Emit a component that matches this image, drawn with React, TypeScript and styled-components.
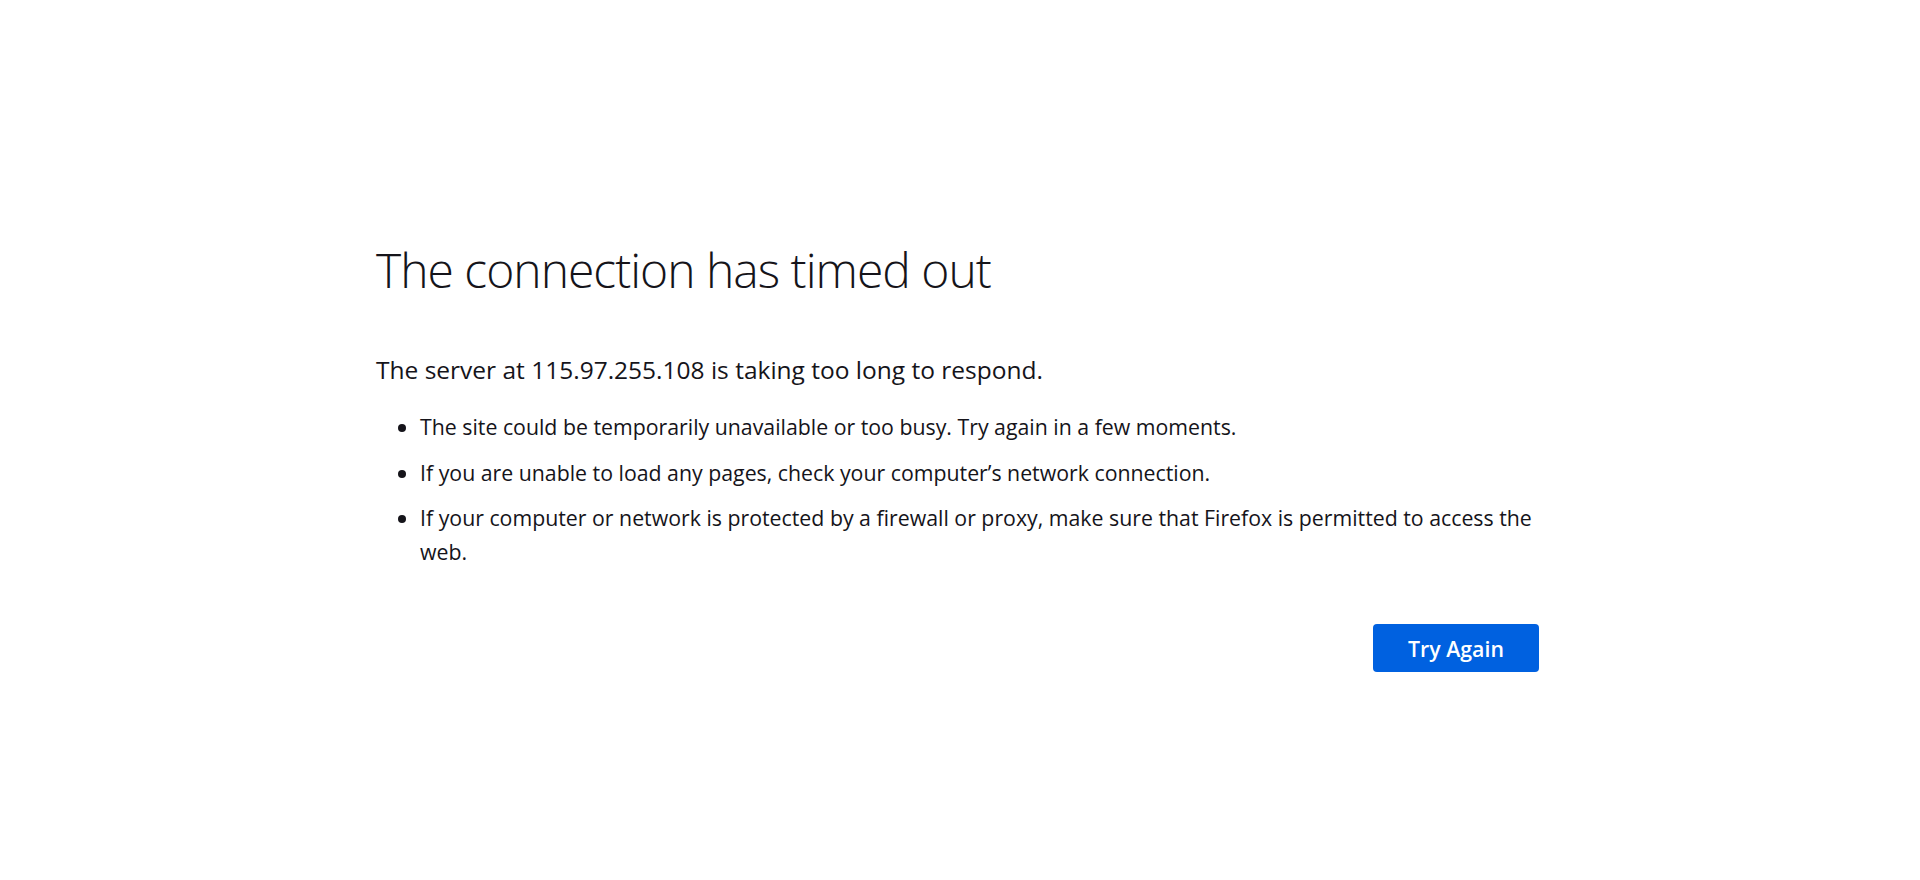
import React from 'react'
import styled, { createGlobalStyle } from 'styled-components'

const GlobalStyle = createGlobalStyle`
  html, body {
    margin: 0;
    padding: 0;
    background: #ffffff;
  }
  body {
    font-family: "Open Sans", "Noto Sans", "Liberation Sans", sans-serif;
    color: #15141a;
  }
`

const Page = styled.main`
  display: flex;
  justify-content: center;
  min-height: 880px;
  box-sizing: border-box;
  padding: 234px 53px 0 48px;
`

const Container = styled.div`
  width: 1163px;
  display: flex;
  flex-direction: column;
`

const Title = styled.h1`
  margin: 0;
  font-size: 48px;
  font-weight: 300;
  line-height: 72px;
  letter-spacing: -1px;
`

const ShortDesc = styled.p`
  margin: 47px 0 0;
  font-size: 24.5px;
  line-height: 34px;
`

const Tips = styled.ul`
  margin: 23px 0 0;
  padding: 0 0 0 44px;
  list-style: disc;
`

const Tip = styled.li`
  font-size: 21.3px;
  line-height: 34px;
  & + & {
    margin-top: 11.5px;
  }
`

const ButtonRow = styled.div`
  display: flex;
  justify-content: flex-end;
  margin-top: 55px;
`

const Button = styled.button`
  width: 166px;
  height: 48px;
  border: none;
  border-radius: 4px;
  background: #0061e0;
  color: #ffffff;
  font-family: inherit;
  font-size: 21.3px;
  font-weight: 600;
  cursor: pointer;
`

const tips = [
  'The site could be temporarily unavailable or too busy. Try again in a few moments.',
  'If you are unable to load any pages, check your computer\u2019s network connection.',
  'If your computer or network is protected by a firewall or proxy, make sure that Firefox is permitted to access the web.',
]

export default function App() {
  return (
    <>
      <GlobalStyle />
      <Page>
        <Container>
          <Title>The connection has timed out</Title>
          <ShortDesc>The server at 115.97.255.108 is taking too long to respond.</ShortDesc>
          <Tips>
            {tips.map(t => (
              <Tip key={t}>{t}</Tip>
            ))}
          </Tips>
          <ButtonRow>
            <Button>Try Again</Button>
          </ButtonRow>
        </Container>
      </Page>
    </>
  )
}
